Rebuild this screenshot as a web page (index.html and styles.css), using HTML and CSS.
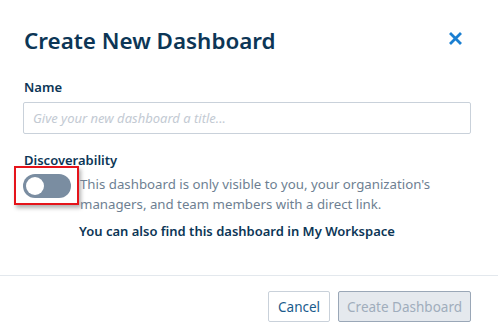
FILE: index.html
```html
<!DOCTYPE html>
<html lang="en">
<head>
  <meta charset="UTF-8">
  <title>Create New Dashboard</title>
  <link rel="stylesheet" href="styles.css">
</head>
<body>
  <div class="modal">
    <!-- Header -->
    <header class="modal-header">
      <h1>Create New Dashboard</h1>
      <button class="close-btn" aria-label="Close">
        <svg width="13" height="13" viewBox="0 0 13 13"><path d="M2 2 L11 11 M11 2 L2 11" stroke="#1b7fd1" stroke-width="2.8" stroke-linecap="square"/></svg>
      </button>
    </header>

    <div class="modal-body">
      <div class="form-group">
        <label for="dashName">Name</label>
        <input type="text" class="form-control" id="dashName" placeholder="Give your new dashboard a title...">
      </div>

      <div class="form-group">
        <div class="group-title">Discoverability</div>
        <div class="discover-row">
          <div class="toggle-wrap">
            <span class="toggle"><span class="knob"></span></span>
          </div>
          <p class="discover-text">This dashboard is only visible to you, your organization's managers, and team members with a direct link.</p>
        </div>
        <p class="workspace-note">You can also find this dashboard in My Workspace</p>
      </div>
    </div>

    <!-- Footer -->
    <footer class="modal-footer">
      <button class="btn btn-cancel">Cancel</button>
      <button class="btn btn-create" disabled>Create Dashboard</button>
    </footer>
  </div>
</body>
</html>
```

FILE: styles.css
```css
:root {
  --navy: #0c3656;
  --blue: #1b7fd1;
  --muted: #6e7f92;
  --border: #c9d1da;
  --divider: #e3e8ed;
}

* {
  margin: 0;
  padding: 0;
  box-sizing: border-box;
  font-family: 'Noto Sans', 'Open Sans', sans-serif;
}

body {
  background: #fff;
  color: var(--navy);
  width: 498px;
  height: 336px;
  overflow: hidden;
}

/* Header */
.modal-header {
  display: flex;
  align-items: center;
  justify-content: space-between;
  padding: 18px 36px 0 24px;
  height: 62px;
}

.modal-header h1 {
  font-size: 22.4px;
  font-weight: 600;
  color: var(--navy);
}

.close-btn {
  background: none;
  border: none;
  display: flex;
  cursor: pointer;
  margin-top: -4px;
}

/* Body */
.modal-body {
  padding: 16px 27px 0 23px;
  height: 214px;
  border-bottom: 1px solid var(--divider);
}

.form-group {
  margin-bottom: 17px;
}

.form-group label,
.group-title {
  display: block;
  font-size: 13px;
  font-weight: 600;
  color: var(--navy);
  margin-left: 1px;
  margin-bottom: 6px;
}

.group-title {
  margin-bottom: 0;
}

.form-control {
  width: 100%;
  height: 32px;
  border: 1px solid var(--border);
  border-radius: 2px;
  padding: 0 9px;
  font-size: 13px;
  color: var(--navy);
}

.form-control::placeholder {
  color: #c3cad3;
  font-style: italic;
}

.discover-row {
  display: flex;
  align-items: flex-start;
  margin-left: -9px;
}

.toggle-wrap {
  width: 65px;
  height: 39px;
  border: 2px solid #e5141b;
  box-shadow: 2px 3px 4px rgba(0, 0, 0, 0.3);
  display: flex;
  align-items: center;
  padding-left: 7px;
  flex-shrink: 0;
  margin-top: -3px;
}

.toggle {
  display: flex;
  align-items: center;
  width: 48px;
  height: 24px;
  border-radius: 12px;
  background: #7a8da1;
  padding-left: 3px;
}

.knob {
  width: 18px;
  height: 18px;
  border-radius: 50%;
  background: #fff;
}

.discover-text {
  font-size: 13.25px;
  line-height: 20px;
  color: var(--muted);
  margin-left: 1px;
  margin-top: 5px;
}

.workspace-note {
  font-size: 13px;
  font-weight: 600;
  color: var(--navy);
  margin: 8px 0 0 56px;
}

/* Footer */
.modal-footer {
  display: flex;
  justify-content: flex-end;
  gap: 8px;
  padding: 15px 27px 0 0;
}

.btn {
  height: 31px;
  border-radius: 2px;
  font-size: 13.5px;
  padding: 0 9px;
  background: #fff;
  cursor: pointer;
}

.btn-cancel {
  border: 1px solid var(--border);
  color: #1a5b8c;
}

.btn-create {
  border: 1px solid #9aa7b7;
  background: #e5e9ee;
  color: #a0adbc;
  padding: 0 8px;
  cursor: not-allowed;
}
```
